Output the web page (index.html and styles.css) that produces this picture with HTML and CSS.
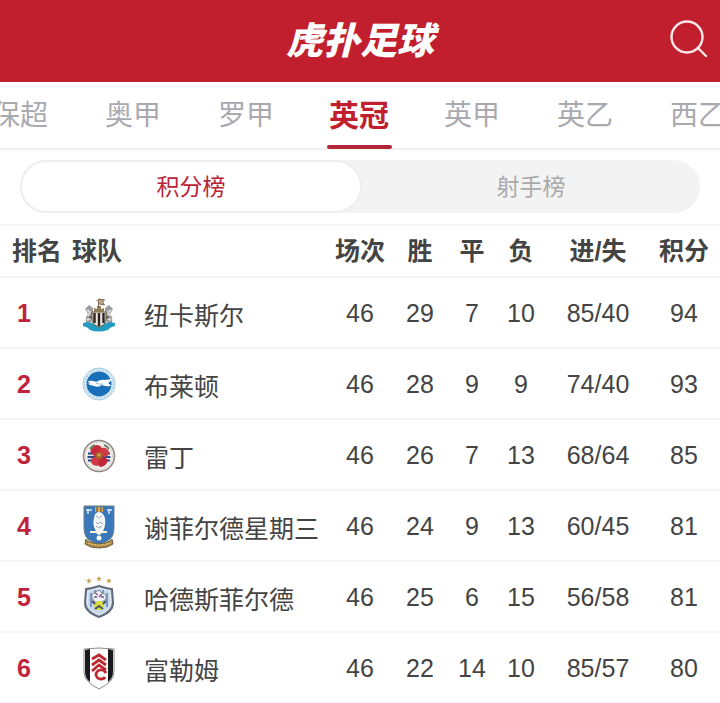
FILE: index.html
```
<!DOCTYPE html>
<html lang="zh-CN">
<head>
  <meta charset="UTF-8">
  <title>虎扑足球 - 英冠积分榜</title>
  <meta name="viewport" content="width=device-width, initial-scale=1.0">
  <link rel="stylesheet" href="styles.css">
</head>
<body>

<header class="topbar">
  <h1 class="logo">虎扑足球</h1>
  <button class="search" type="button" aria-label="搜索">
    <svg width="40" height="40" viewBox="0 0 40 40" fill="none" stroke="#fbe9ea" stroke-width="2.400" stroke-linecap="round">
      <circle cx="18" cy="17" r="15.500"/>
      <path d="M29 28l8 8"/>
    </svg>
  </button>
</header>

<nav class="tabs">
  <a class="tab" href="#">保超</a>
  <a class="tab" href="#">奥甲</a>
  <a class="tab" href="#">罗甲</a>
  <a class="tab active" href="#">英冠</a>
  <a class="tab" href="#">英甲</a>
  <a class="tab" href="#">英乙</a>
  <a class="tab" href="#">西乙</a>
</nav>

<main>
  <div class="switch-wrap">
    <div class="switch">
      <button class="switch-item active" type="button">积分榜</button>
      <button class="switch-item" type="button">射手榜</button>
    </div>
  </div>

  <table class="standings">
    <colgroup>
      <col class="col-rank">
      <col class="col-crest">
      <col>
      <col class="col-played">
      <col class="col-win">
      <col class="col-draw">
      <col class="col-loss">
      <col class="col-goals">
      <col class="col-points">
    </colgroup>
    <thead>
      <tr>
        <th class="rank">排名</th>
        <th class="team" colspan="2">球队</th>
        <th>场次</th>
        <th>胜</th>
        <th>平</th>
        <th>负</th>
        <th>进/失</th>
        <th>积分</th>
      </tr>
    </thead>
    <tbody>
      <tr>
        <td class="rank">1</td>
        <td class="crest">
          <svg viewBox="0 -1 50 54">
            <path d="M9 35q3 0 4-2 12 7 24 0 1 2 4 2v3q-5 1-7 4-9 3-18 0-2-3-7-4z" fill="#249bc0"/>
            <path d="M12 34q-1-5 2-8l-3-5 4-4 4 3v7l-2 8z" fill="#9a9ba1"/>
            <path d="M38 34q1-5-2-8l3-5-4-4-4 3v7l2 8z" fill="#9a9ba1"/>
            <path d="M13 22l3 2-2 4m-1 4l4-2m20-8l-3 2 2 4m1 4l-4-2" fill="none" stroke="#ddd" stroke-width="2"/>
            <path d="M15 29l3 1m17-1l-3 1" stroke="#6b5d4c" stroke-width="2"/>
            <path d="M18 24h14v7q0 6-7 8-7-2-7-8z" fill="#f2e7d2" stroke="#655942"/>
            <path d="M20.500 25v10M25 25v13M29.500 25v10" stroke="#25242a" stroke-width="2.400"/>
            <path d="M20 24v-4l3 1v-3h4v3l3-1v4z" fill="#8f7c58"/>
            <path d="M24.500 19v-8l6 1-2 2 2 3-5-1" fill="#baa58c" stroke="#7b6449"/>
            <path d="M22 12l3 2" stroke="#a58a6d"/>
          </svg>
        </td>
        <td class="name">纽卡斯尔</td>
        <td>46</td><td>29</td><td>7</td><td>10</td><td>85/40</td><td>94</td>
      </tr>
      <tr>
        <td class="rank">2</td>
        <td class="crest">
          <svg viewBox="0 -1 50 54">
            <circle cx="25" cy="25" r="16" fill="#e3f0f8" stroke="#9fc9e3"/>
            <circle cx="25" cy="25" r="14" fill="none" stroke="#a5cce6" stroke-width="1.500" stroke-dasharray="1.500 1.500"/>
            <circle cx="25" cy="25" r="12.500" fill="#1770b8"/>
            <path d="M14 22q5-1 8 1 5-3 9-2l7-1q-2 3-4 4 2 1 3 3-5 1-9-1-4 3-8 1-4 0-7-3l3 1z" fill="#fff"/>
            <path d="M22 24q3 2 7 1" fill="none" stroke="#8bb9db"/>
          </svg>
        </td>
        <td class="name">布莱顿</td>
        <td>46</td><td>28</td><td>9</td><td>9</td><td>74/40</td><td>93</td>
      </tr>
      <tr>
        <td class="rank">3</td>
        <td class="crest">
          <svg viewBox="0 -2 50 54">
            <circle cx="25" cy="25" r="15.500" fill="#f4f1ed" stroke="#8c8581" stroke-width="1.500"/>
            <circle cx="25" cy="25" r="13.500" fill="none" stroke="#b3aca7" stroke-dasharray="1 1.500"/>
            <circle cx="25" cy="25" r="11.500" fill="#e9e4e6"/>
            <path d="M14 21.500h22v2H14zM13.500 25h23v2h-23zM14 28.500h22v2H14z" fill="#28498c"/>
            <path d="M18 17q4-5 8-2 3 2 2 6l-3 4q-5 1-7-2-3-3 0-6z" fill="#c92a3b"/>
            <path d="M28 17q5-1 7 4 0 4-4 5l-5-1q-2-5 2-8z" fill="#d23a45"/>
            <path d="M17 28q4-4 8-2l2 3q0 5-4 6-7-1-6-7z" fill="#d23a45"/>
            <path d="M26 27q5-2 8 2-2 7-8 7-4-4 0-9z" fill="#c12536"/>
            <circle cx="25" cy="24.500" r="3.500" fill="#a7652c"/>
            <path d="M23 24l2-2 2 2-2 2z" fill="#d8a345"/>
            <path d="M16 18q2-3 5-4M30 14q3 1 5 4" fill="none" stroke="#5a7a55" stroke-width="1.500"/>
          </svg>
        </td>
        <td class="name">雷丁</td>
        <td>46</td><td>26</td><td>7</td><td>13</td><td>68/64</td><td>85</td>
      </tr>
      <tr>
        <td class="rank">4</td>
        <td class="crest">
          <svg viewBox="0 0 50 54">
            <path d="M10 6h30v22q0 10-7 13l-8 4-8-4q-7-3-7-13z" fill="#3979bb" stroke="#6f7f86"/>
            <path d="M12 39q3 4 13 5 10-1 13-5l1 5q-5 4-14 4t-14-4z" fill="#b08c48" stroke="#6c5b3b"/>
            <path d="M14 43q11 4 22 0" fill="none" stroke="#f0d78d" stroke-dasharray="2 1"/>
            <path d="M12 10h6M14 9v5M33 10h5M35 9v5" stroke="#dfe9ef" stroke-width="1.500"/>
            <path d="M21 7h8v5h-8z" fill="#d3ae62"/>
            <path d="M23 7v5M27 7v5" stroke="#574a37"/>
            <path d="M21 14q4-4 8 0l2 4q1 8-2 13l-4 3-3-3q-4-6-2-13z" fill="#f5f7f5"/>
            <path d="M22 16l2 1m4-1l-2 1M25 17v2M22 22l2 2 2-2 3 2M22 26l3 2 3-2" fill="none" stroke="#9aa8ad"/>
            <path d="M16 32h6l3 2 3-2h5" fill="none" stroke="#f4f1dc" stroke-width="2"/>
            <circle cx="25" cy="38" r="2.500" fill="#f4f5ef"/>
          </svg>
        </td>
        <td class="name">谢菲尔德星期三</td>
        <td>46</td><td>24</td><td>9</td><td>13</td><td>60/45</td><td>81</td>
      </tr>
      <tr>
        <td class="rank">5</td>
        <td class="crest">
          <svg viewBox="0 0 50 54">
            <path d="M15 7l1 2h2l-2 1.500.500 2-1.500-1-2 1 1-2-2-1.500h2zM25 5l1 2h2l-2 1.500.500 2-1.500-1-2 1 1-2-2-1.500h2zM35 7l1 2h2l-2 1.500.500 2-1.500-1-2 1 1-2-2-1.500h2z" fill="#c9a64e"/>
            <path d="M12 18l6-1 7-2 7 2 6 1 1 14q0 9-14 14-14-5-14-14z" fill="#a9bdd8" stroke="#646b78" stroke-width="2"/>
            <path d="M14 20l11-3 11 3 1 11q0 8-12 13-12-5-12-13z" fill="#c7d8ec" stroke="#f0f4f8"/>
            <path d="M17 22v14M21 19v5M29 19v5M33 22v14" stroke="#7899c4" stroke-width="2"/>
            <path d="M18 27q-1-5 4-6l3-2 3 3q5 1 4 6l-4 3h-7z" fill="#eff2f5" stroke="#858698"/>
            <path d="M21 22l3 2m4-1l-3 3m-5 0h3m4 0h3" stroke="#77588c" stroke-width="1.500"/>
            <path d="M20 35q0-5 5-5t5 5l-2 4h-6z" fill="#d9df40"/>
            <path d="M18 30l3 3m11-3l-3 3M21 38l4-3 4 3" fill="none" stroke="#4d5260" stroke-width="2"/>
          </svg>
        </td>
        <td class="name">哈德斯菲尔德</td>
        <td>46</td><td>25</td><td>6</td><td>15</td><td>56/58</td><td>81</td>
      </tr>
      <tr>
        <td class="rank">6</td>
        <td class="crest">
          <svg viewBox="0 0 50 54">
            <path d="M10 7q15-2 30 0v23q0 10-15 17-15-7-15-17z" fill="#fff" stroke="#8b8b8b"/>
            <path d="M11 8l5-1v33q-5-4-5-10zM34 7l5 1v22q0 6-5 10z" fill="#191a1d"/>
            <g fill="none" stroke="#bd2932" stroke-width="2.800">
              <path d="M18 17l7-4 7 5M18 23l7-5 7 5M18 29l7-6 7 5"/>
              <path d="M32 31q-2-4-6-3-4 1-4 5 1 4 5 4 3 0 4-2"/>
            </g>
          </svg>
        </td>
        <td class="name">富勒姆</td>
        <td>46</td><td>22</td><td>14</td><td>10</td><td>85/57</td><td>80</td>
      </tr>
    </tbody>
  </table>
</main>

</body>
</html>
```
FILE: styles.css
```
* {
  box-sizing: border-box;
}

body {
  margin: 0;
  background: #fff;
  color: #444;
  font-family: "Liberation Sans", "Noto Sans CJK SC", sans-serif;
}

a {
  text-decoration: none;
}

button {
  border: none;
  padding: 0;
  background: none;
  font-family: inherit;
  cursor: pointer;
}

/* top bar */
.topbar {
  display: grid;
  grid-template-columns: 1fr auto 1fr;
  align-items: center;
  height: 82px;
  padding: 0 11px 6px;
  background: #c21f2e;
}

.logo {
  grid-column: 2;
  margin: 0;
  color: #fff;
  font-family: "Noto Sans CJK SC", sans-serif;
  font-size: 37px;
  font-weight: 900;
  font-style: italic;
  line-height: 48px;
}

.search {
  justify-self: end;
  height: 36px;
}

.search svg {
  display: block;
}

/* league tabs */
.tabs {
  display: flex;
  justify-content: center;
  height: 68px;
  padding-right: 2px;
  overflow: hidden;
  box-shadow: inset 0 -2px #f0f0f1;
}

.tab {
  display: flex;
  flex: 0 0 113px;
  flex-direction: column;
  align-items: center;
  padding-top: 4px;
  color: #a9a9b0;
  font-size: 28px;
  line-height: 59px;
}

.tab.active {
  color: #c21f2e;
  font-size: 30px;
  font-weight: bold;
}

.tab.active::after {
  content: "";
  width: 65px;
  height: 4px;
  border-radius: 2px;
  background: #b3263a;
}

/* standings / scorers switch */
.switch-wrap {
  padding: 10px 20px 11px;
  border-bottom: 2px solid #f5f5f5;
}

.switch {
  display: flex;
  height: 53px;
  border-radius: 27px;
  background: #f3f3f3;
}

.switch-item {
  flex: 1;
  padding-bottom: 3px;
  border-radius: 27px;
  color: #aaa;
  font-size: 23px;
}

.switch-item.active {
  border: 2px solid #eee;
  background: #fff;
  color: #b92338;
}

/* table */
.standings {
  width: 100%;
  border-collapse: separate;
  border-spacing: 0;
  table-layout: fixed;
  font-size: 25px;
  text-align: center;
}

.standings th,
.standings td {
  padding: 0;
  border-bottom: 2px solid #f5f5f5;
  white-space: nowrap;
}

.standings th {
  height: 52px;
  line-height: 50px;
}

.standings td {
  height: 71px;
  padding-top: 2px;
}

.col-rank,
.col-crest,
.col-points {
  width: 72px;
}

.col-played,
.col-win {
  width: 60px;
}

.col-draw {
  width: 44px;
}

.col-loss {
  width: 54px;
}

.col-goals {
  width: 100px;
}

.standings .rank {
  text-align: left;
}

.standings th.rank {
  padding-left: 12px;
}

.standings td.rank {
  padding-left: 17px;
  color: #c0233c;
  font-weight: bold;
}

.standings .team,
.standings .name {
  text-align: left;
}

.crest svg {
  display: block;
  width: 50px;
  height: 54px;
  margin-left: 2px;
}
```
